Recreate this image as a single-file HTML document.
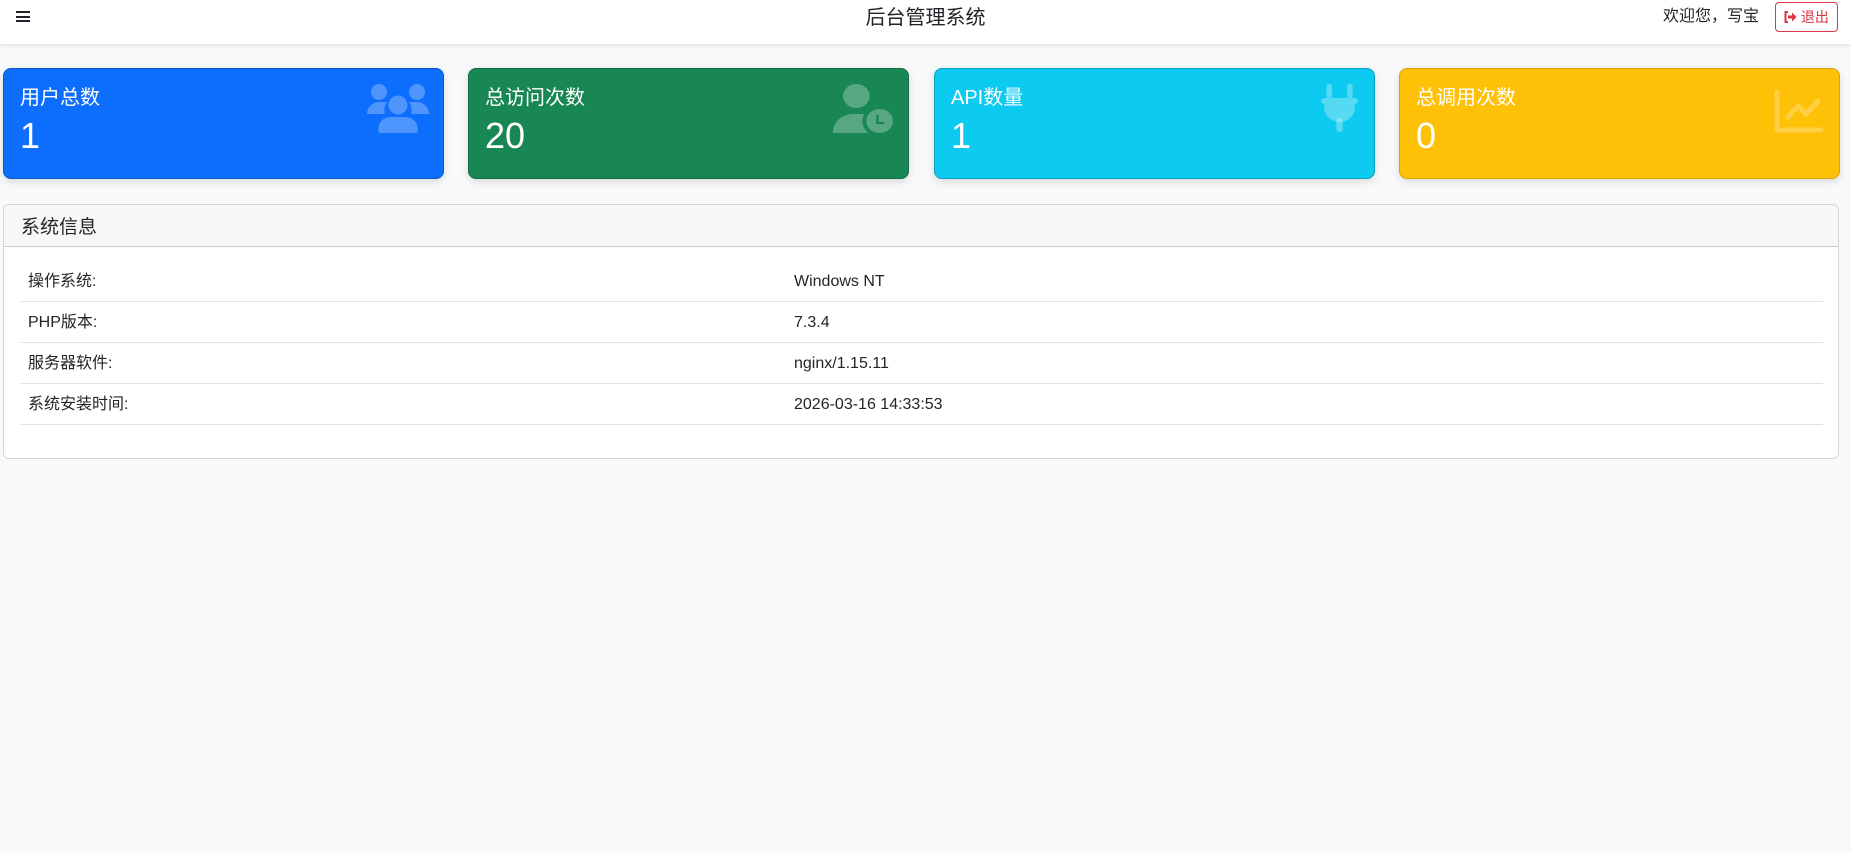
<!DOCTYPE html>
<html><head><meta charset="utf-8"><style>
*{box-sizing:border-box;margin:0;padding:0}
body{width:1851px;height:853px;background:#f8f9fa;font-family:"Liberation Sans","Noto Sans CJK SC",sans-serif;color:#212529;position:relative;overflow:hidden}
.hdr{position:absolute;left:0;top:0;width:1851px;height:44px;background:#fff;box-shadow:0 2px 4px rgba(0,0,0,.08)}
.ham{position:absolute;left:16px;top:11px;width:14px;height:11px;border-top:2px solid #212529;border-bottom:2px solid #212529}
.ham:after{content:"";position:absolute;left:0;top:2.5px;width:14px;height:2px;background:#212529}
.title{position:absolute;left:0;width:1851px;top:4px;line-height:28px;text-align:center;font-size:20px}
.wel{position:absolute;left:1663px;top:6px;line-height:22px;font-size:16px}
.out{position:absolute;left:1775px;top:2px;width:63px;height:30px;border:1px solid #dc3545;border-radius:4px;color:#dc3545;font-size:14px;line-height:28px;text-align:center}
.card{position:absolute;top:68px;width:441px;height:111px;border-radius:8px;color:#fff;box-shadow:0 3px 8px rgba(0,0,0,.12)}
.card .l{position:absolute;left:16px;top:15px;line-height:28px;font-size:20px}
.card .n{position:absolute;left:16px;top:46px;font-size:36px}
.card svg{position:absolute}
.panel{position:absolute;left:3px;top:204px;width:1836px;height:255px;background:#fff;border:1px solid #d6d6d6;border-radius:6px;overflow:hidden}
.ph{height:42px;background:#f7f7f7;border-bottom:1px solid #ccc;font-size:19px;padding:7px 0 0 17px}
.row{position:absolute;left:17px;width:1802px;height:41px;border-bottom:1px solid #dee2e6;font-size:16px}
.row span{position:absolute;top:11px;line-height:20px}
</style></head><body>
<div class="hdr"><div class="ham"></div><div class="title">后台管理系统</div><div class="wel">欢迎您，写宝</div>
<div class="out"><svg width="13" height="12" viewBox="0 0 13 12" style="vertical-align:-1px"><path d="M4 1H1.5v10H4" fill="none" stroke="#dc3545" stroke-width="2"/><path d="M4 4.5h4V1.5l4.5 4.5L8 10.5V7.5H4z" fill="#dc3545"/></svg> 退出</div></div>

<div class="card" style="left:3px;background:#0d6efd;border:1px solid #0a58ca"><div class="l">用户总数</div><div class="n">1</div>
<svg style="left:363px;top:15px" width="62" height="50" viewBox="0 0 62 50" fill="rgba(255,255,255,.27)"><circle cx="12" cy="8" r="8"/><circle cx="50" cy="8" r="8"/><path d="M0 30a12 12 0 0 1 12-12h8a14 14 0 0 0 -2 12z"/><path d="M62 30a12 12 0 0 0 -12-12h-8a14 14 0 0 1 2 12z"/><circle cx="31" cy="21" r="9.5"/><path d="M12 49a12 12 0 0 1 12-16h14a12 12 0 0 1 12 16z"/></svg></div>

<div class="card" style="left:468px;background:#198754;border:1px solid #146c43"><div class="l">总访问次数</div><div class="n">20</div>
<svg style="left:364px;top:15px" width="60" height="50" viewBox="0 0 54 50" preserveAspectRatio="none" fill="rgba(255,255,255,.27)"><circle cx="21" cy="12" r="12"/><path d="M0 49a18 18 0 0 1 18-19h10a16 16 0 0 0 4 19z"/><circle cx="42" cy="37" r="12"/><path d="M40 31v8h6" stroke="#198754" stroke-width="2.2" fill="none"/></svg></div>

<div class="card" style="left:934px;background:#0dcaf0;border:1px solid #0aa2c0"><div class="l">API数量</div><div class="n">1</div>
<svg style="left:386px;top:15px" width="37" height="50" viewBox="0 0 34 50" preserveAspectRatio="none" fill="rgba(255,255,255,.3)"><rect x="5" y="0" width="5" height="14" rx="2"/><rect x="24" y="0" width="5" height="14" rx="2"/><rect x="0" y="14" width="34" height="6" rx="3"/><path d="M3 20h28v4a14 14 0 0 1 -28 0z"/><rect x="14" y="34" width="6" height="14" rx="3"/></svg></div>

<div class="card" style="left:1399px;background:#ffc107;border:1px solid #d9a406"><div class="l">总调用次数</div><div class="n">0</div>
<svg style="left:374px;top:20px" width="50" height="44" viewBox="0 0 50 44" fill="none" stroke="rgba(255,255,255,.25)" stroke-width="5" stroke-linecap="round" stroke-linejoin="round"><path d="M3 3v38h44"/><path d="M14 28l10-11 8 8 12-13"/></svg></div>

<div class="panel"><div class="ph">系统信息</div>
<div class="row" style="top:56px"><span style="left:7px">操作系统:</span><span style="left:773px">Windows NT</span></div>
<div class="row" style="top:97px"><span style="left:7px">PHP版本:</span><span style="left:773px">7.3.4</span></div>
<div class="row" style="top:138px"><span style="left:7px">服务器软件:</span><span style="left:773px">nginx/1.15.11</span></div>
<div class="row" style="top:179px"><span style="left:7px">系统安装时间:</span><span style="left:773px">2026-03-16 14:33:53</span></div>
</div>
</body></html>
